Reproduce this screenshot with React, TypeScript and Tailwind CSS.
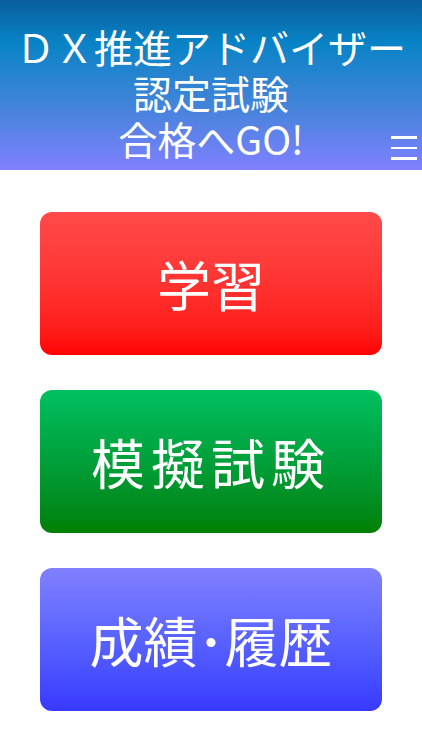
import { useState } from "react";

const MENU = [
  {
    label: "学習",
    className: "bg-gradient-to-b from-[#ff4a4a] to-[#ff0000]",
    textClass: "",
  },
  {
    label: "模擬試験",
    className: "bg-gradient-to-b from-[#00c060] to-[#008000]",
    textClass: "tracking-[6px]",
  },
  {
    label: "成績･履歴",
    className: "bg-gradient-to-b from-[#8080ff] to-[#3838ff]",
    textClass: "",
  },
] as const;

function Hamburger({ onClick }: { onClick: () => void }) {
  return (
    <button
      type="button"
      onClick={onClick}
      aria-label="menu"
      className="absolute bottom-[8px] right-[4px] flex h-[28px] w-[28px] flex-col items-center justify-center gap-[8px]"
    >
      <span className="block h-[2.5px] w-[26px] bg-white" />
      <span className="block h-[2.5px] w-[26px] bg-white" />
      <span className="block h-[2.5px] w-[26px] bg-white" />
    </button>
  );
}

export default function App() {
  const [open, setOpen] = useState(false);

  return (
    <div
      className="flex min-h-[750px] w-full flex-col bg-white"
      style={{ fontFamily: '"Noto Sans CJK JP", "Noto Sans", sans-serif' }}
    >
      <header className="relative h-[170px] bg-[linear-gradient(to_bottom,#0a5e9c_0%,#0883c6_25%,#3f84d8_60%,#8080ff_100%)] pt-[23px] text-center text-[39px] leading-[46px] text-white">
        <div>ＤＸ推進アドバイザー</div>
        <div>認定試験</div>
        <div>合格へGO!</div>
        <Hamburger onClick={() => setOpen((o) => !o)} />
      </header>

      <main className="flex flex-col gap-[35px] px-[40px] pt-[42px]">
        {MENU.map((item) => (
          <button
            key={item.label}
            type="button"
            className={`flex h-[143px] w-full items-center justify-center rounded-[12px] text-[54px] text-white ${item.className}`}
          >
            <span className={item.textClass}>{item.label}</span>
          </button>
        ))}
      </main>

      {open && (
        <div className="absolute right-0 top-[170px] w-[180px] bg-white shadow-lg">
          <div className="px-4 py-3 text-sm text-gray-700">メニュー</div>
        </div>
      )}
    </div>
  );
}
